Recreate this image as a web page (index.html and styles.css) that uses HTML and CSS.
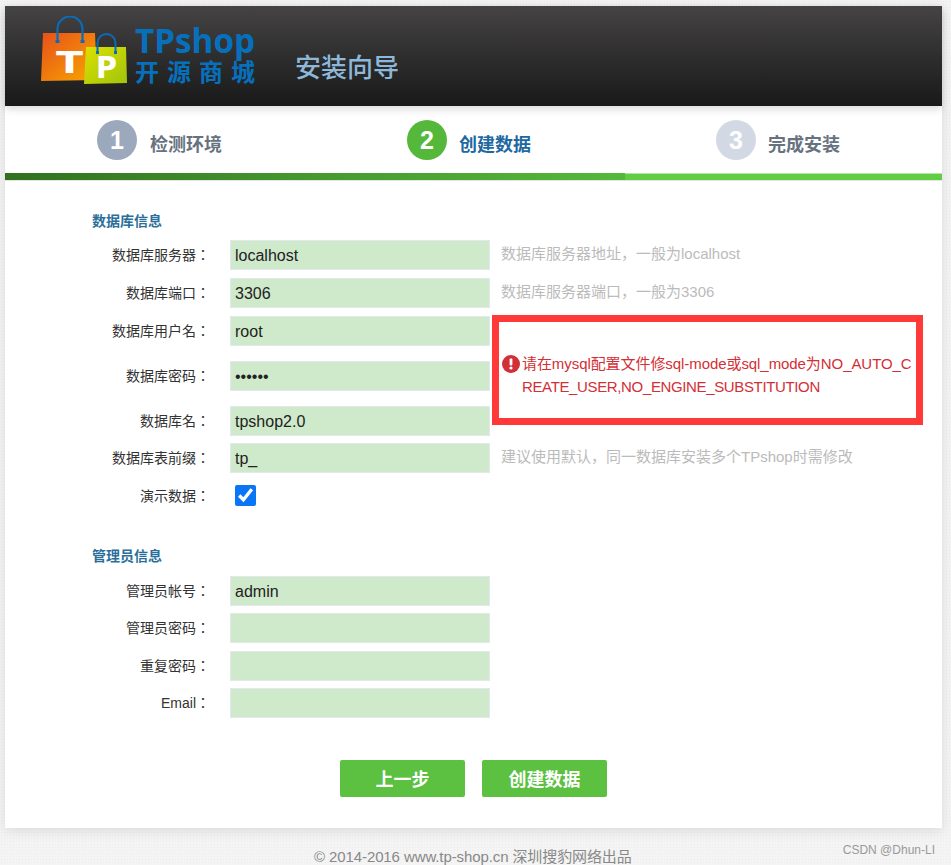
FILE: index.html
```html
<!DOCTYPE html>
<html lang="en">

<head>
	<meta charset="UTF-8">
	<title>TPshop 安装向导</title>
	<link rel="stylesheet" href="styles.css">
</head>

<body>
	<div class="wrap">
		<div class="header">
			<svg class="logo" width="226" height="72" viewBox="0 0 226 72">
				<defs>
					<linearGradient id="bag1" x1="0" y1="0" x2="1" y2="1">
						<stop offset="0" stop-color="#e8501a" />
						<stop offset="1" stop-color="#f8a800" />
					</linearGradient>
					<linearGradient id="bag2" x1="0" y1="0" x2="1" y2="1">
						<stop offset="0" stop-color="#dbe000" />
						<stop offset="1" stop-color="#a2c40c" />
					</linearGradient>
				</defs>
				<path d="M3 17H55L57 64L1 65Z" fill="url(#bag1)" />
				<path d="M17.5 26V13a12.5 12.5 0 0 1 25 0V26" fill="none" stroke="#0a6cb8" stroke-width="2.2" />
				<path d="M15.5 24h4v3h-4zM40.5 24h4v3h-4z" fill="#0a6cb8" />
				<path d="M46 31H86L87 67L44 68Z" fill="url(#bag2)" />
				<path d="M57.5 37V27a9 9 0 0 1 18 0V37" fill="none" stroke="#0a6cb8" stroke-width="2" />
				<path d="M56 35h3v3h-3zM74 35h3v3h-3z" fill="#0a6cb8" />
				<text x="16" y="57" class="bag-t" textLength="27" lengthAdjust="spacingAndGlyphs">T</text>
				<text x="56" y="62" class="bag-p" textLength="21" lengthAdjust="spacingAndGlyphs">P</text>
				<text x="95" y="37" class="logo-name" textLength="120" lengthAdjust="spacingAndGlyphs">TPshop</text>
				<text x="95" y="65" class="logo-sub">开源商城</text>
			</svg>
			<div class="header-title">安装向导</div>
		</div>

		<div class="steps">
			<div class="step step-done"><span class="num">1</span><span class="step-name">检测环境</span></div>
			<div class="step step-on"><span class="num">2</span><span class="step-name">创建数据</span></div>
			<div class="step step-todo"><span class="num">3</span><span class="step-name">完成安装</span></div>
		</div>
		<div class="progress">
			<div class="bar bar-1"></div>
			<div class="bar bar-2"></div>
			<div class="bar bar-3"></div>
		</div>

		<div class="content">
			<div class="section-title">数据库信息</div>
			<div class="rows rows-db">
				<div class="row">
					<label>数据库服务器：</label>
					<input class="field" type="text" value="localhost">
					<span class="hint">数据库服务器地址，一般为localhost</span>
				</div>
				<div class="row">
					<label>数据库端口：</label>
					<input class="field" type="text" value="3306">
					<span class="hint">数据库服务器端口，一般为3306</span>
				</div>
				<div class="group">
					<div class="group-rows">
						<div class="row">
							<label>数据库用户名：</label>
							<input class="field" type="text" value="root">
						</div>
						<div class="row">
							<label>数据库密码：</label>
							<input class="field" type="password" value="123456">
						</div>
						<div class="row">
							<label>数据库名：</label>
							<input class="field" type="text" value="tpshop2.0">
						</div>
					</div>
					<div class="tip">
						<svg class="tip-icon" width="18" height="18" viewBox="0 0 18 18">
							<circle cx="9" cy="9" r="9" fill="#d32f36" />
							<rect x="7.6" y="3.5" width="2.8" height="7" rx="1" fill="#fff" />
							<circle cx="9" cy="13" r="1.6" fill="#fff" />
						</svg>
						<div class="tip-text">
							<span class="tip-line">请在mysql配置文件修sql-mode或sql_mode为NO_AUTO_C</span>
							<span class="tip-line tip-caps">REATE_USER,NO_ENGINE_SUBSTITUTION</span>
						</div>
					</div>
				</div>
				<div class="row">
					<label>数据库表前缀：</label>
					<input class="field" type="text" value="tp_">
					<span class="hint">建议使用默认，同一数据库安装多个TPshop时需修改</span>
				</div>
				<div class="row row-check">
					<label>演示数据：</label>
					<input class="check" type="checkbox" checked>
				</div>
			</div>

			<div class="section-title section-admin">管理员信息</div>
			<div class="rows">
				<div class="row">
					<label>管理员帐号：</label>
					<input class="field" type="text" value="admin">
				</div>
				<div class="row">
					<label>管理员密码：</label>
					<input class="field" type="password">
				</div>
				<div class="row">
					<label>重复密码：</label>
					<input class="field" type="password">
				</div>
				<div class="row">
					<label>Email：</label>
					<input class="field" type="text">
				</div>
			</div>

			<div class="buttons">
				<a class="btn">上一步</a>
				<a class="btn">创建数据</a>
			</div>
		</div>
	</div>
	<div class="footer">© 2014-2016 www.tp-shop.cn 深圳搜豹网络出品</div>
	<div class="mark">CSDN @Dhun-LI</div>
</body>

</html>
```

FILE: styles.css
```css
*,
*::after {
	box-sizing: border-box;
}

html,
body {
	height: 865px;
	overflow: hidden;
}

body {
	margin: 0;
	position: relative;
	background-color: #f4f4f4;
	background-image: radial-gradient(#ececec 1px, transparent 1px);
	background-size: 3px 3px;
	font-family: "Liberation Sans", "Noto Sans CJK SC", sans-serif;
	color: #333;
}

.wrap {
	width: 937px;
	margin: 6px 0 0 5px;
	background-color: #fff;
	box-shadow: 0 3px 12px rgba(0, 0, 0, 0.1);
}

.header {
	height: 100px;
	display: flex;
	align-items: flex-start;
	padding: 10px 0 0 35px;
	background: linear-gradient(#454344, #19191a);
	box-shadow: 0 3px 8px rgba(0, 0, 0, 0.15);
	position: relative;
}

.logo {
	display: block;
}

.bag-t,
.bag-p {
	font: bold 30px "DejaVu Sans", sans-serif;
	fill: #fff;
}

.logo-name {
	font: bold 34px "Open Sans", sans-serif;
	fill: #0670bd;
}

.logo-sub {
	font: bold 24px "Noto Sans CJK SC", sans-serif;
	fill: #0670bd;
	letter-spacing: 8px;
}

.header-title {
	margin: 35px 0 0 29px;
	font-size: 26px;
	line-height: 34px;
	font-weight: 500;
	color: #8db8da;
}

.steps {
	display: grid;
	grid-template-columns: 310px 310px 317px;
	height: 67px;
}

.step {
	display: flex;
	align-items: center;
	gap: 12px;
	padding: 1px 0 0 92px;
}

.step-done {
	gap: 13px;
}

.step-todo {
	padding-left: 91px;
}

.num {
	width: 40px;
	height: 40px;
	border-radius: 50%;
	display: flex;
	align-items: center;
	justify-content: center;
	color: #fff;
	font-size: 25px;
	font-weight: bold;
}

.step-name {
	font-size: 18px;
	font-weight: bold;
	margin-top: 6px;
	color: #67727f;
}

.step-done .num {
	background-color: #9ca9bc;
}

.step-on .num {
	background-color: #55b83a;
}

.step-on .step-name {
	color: #20689f;
}

.step-todo .num {
	background-color: #d3d9e4;
}

.progress {
	display: flex;
	height: 8px;
	border-bottom: 1px solid #e4e4e4;
}

.bar {
	height: 7px;
}

.bar-1 {
	width: 310px;
	background: linear-gradient(90deg, #31701f, #45992f);
}

.bar-2 {
	width: 310px;
	background: linear-gradient(90deg, #45992f, #56b83a);
}

.bar-3 {
	width: 317px;
	background-color: #60cd42;
	border-top: 1px solid #b5e3a6;
}

.content {
	height: 647px;
	padding: 31px 0 0 87px;
}

.section-title {
	font-size: 14px;
	font-weight: bold;
	line-height: 18px;
	color: #2a6f9a;
}

.section-admin {
	margin-top: 41px;
}

.rows {
	display: flex;
	flex-direction: column;
	gap: 7.4px;
	margin-top: 11px;
}

.rows-db {
	gap: 8px;
	margin-top: 10px;
}

.row {
	display: flex;
	align-items: center;
	height: 30px;
}

label {
	width: 118px;
	margin-right: 20px;
	text-align: right;
	font-family: "Liberation Sans", "Noto Sans CJK TC", sans-serif;
	font-size: 14px;
	line-height: 20px;
}

.field {
	width: 260px;
	height: 30px;
	padding: 2px 4px 0;
	border: 1px solid #e2e8ec;
	background-color: #cfe9cb;
	font: 16px "Liberation Sans", sans-serif;
	color: #222;
	outline: none;
}

.hint {
	margin-left: 11px;
	padding-bottom: 2px;
	font-size: 15px;
	line-height: 20px;
	color: #bbb;
}

.group {
	display: flex;
	position: relative;
	margin-bottom: -1px;
}

.group-rows {
	display: flex;
	flex-direction: column;
	gap: 15px;
}

.tip {
	display: flex;
	align-items: flex-start;
	width: 414px;
	margin: 36px 0 0 12px;
	gap: 2px;
	color: #d32f36;
	font-size: 15px;
	line-height: 23px;
	letter-spacing: -0.07px;
}

.tip-icon {
	flex: none;
	margin-top: 3px;
}

.tip-line {
	display: block;
	white-space: nowrap;
}

.tip-caps {
	letter-spacing: -0.36px;
}

/* annotation drawn over the form */
.tip::after {
	content: "";
	position: absolute;
	left: 400px;
	top: -1px;
	width: 431px;
	height: 110px;
	border: 7px solid #ff3838;
}

.row-check {
	height: 21px;
	margin-top: 4px;
}

.check {
	width: 21px;
	height: 21px;
	margin: 0 0 0 5px;
	accent-color: #0a76f5;
}

.buttons {
	display: flex;
	justify-content: flex-start;
	gap: 17px;
	margin: 42px 0 0 248px;
}

.btn {
	width: 125px;
	height: 37px;
	border-radius: 2px;
	background-color: #5cc040;
	color: #fff;
	font-size: 18px;
	font-weight: bold;
	line-height: 41px;
	text-align: center;
}

.footer {
	margin: 20px 0 0 314px;
	font-size: 15px;
	line-height: 18px;
	letter-spacing: -0.1px;
	color: #888;
}

.mark {
	position: absolute;
	right: 16px;
	top: 842px;
	font-size: 12px;
	line-height: 16px;
	color: #999;
}
```
